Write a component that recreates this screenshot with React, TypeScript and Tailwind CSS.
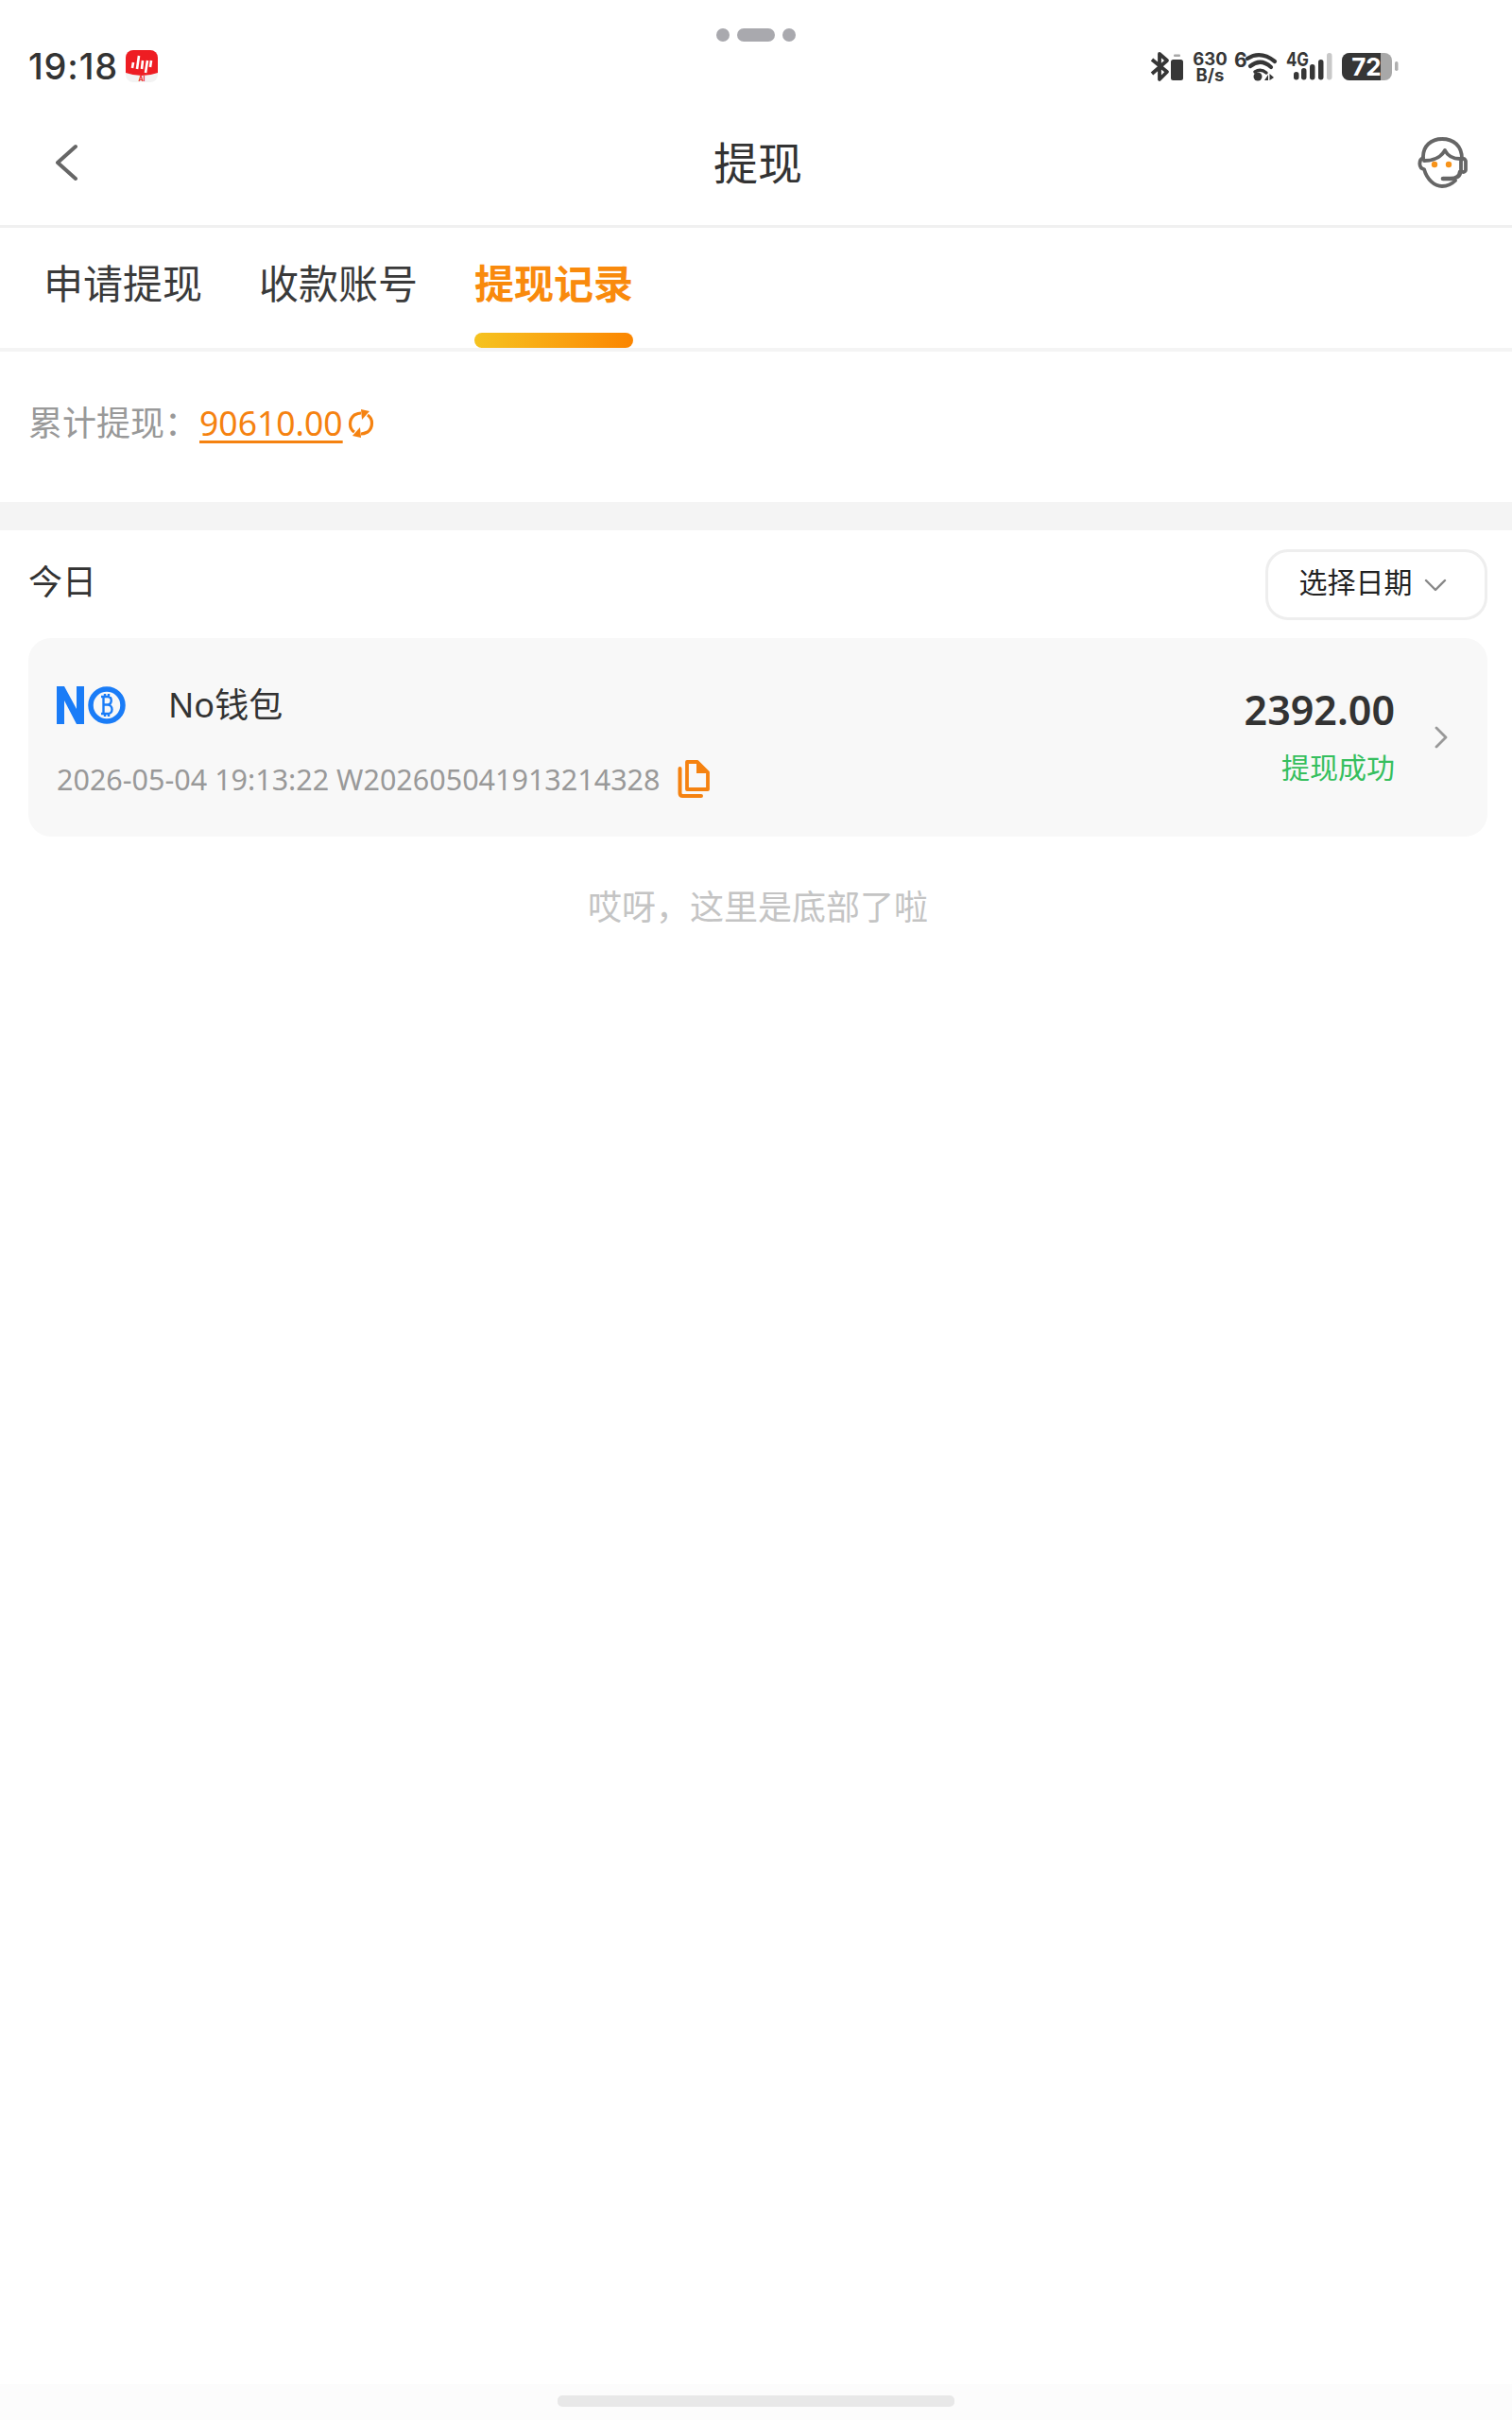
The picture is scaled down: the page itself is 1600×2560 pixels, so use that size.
const font = { fontFamily: '"Noto Sans", "Noto Sans CJK SC", sans-serif' };

const StatusIcons = () => (
  <svg width="264" height="44" viewBox="1217 48 264 44" className="block">
    <g fill="none" stroke="#363636" strokeWidth="3.8" strokeLinejoin="round">
      <path d="M1219 63 L1235 76 L1227 84 L1227 57 L1235 64 L1219 78" />
    </g>
    <rect x="1239" y="63" width="13" height="22" rx="2.5" fill="#363636" />
    <rect x="1242" y="57.5" width="7" height="2.5" rx="1" fill="#a8a8a8" />
    <text textAnchor="middle" fontSize="18.5" fontWeight="700" fill="#363636" fontFamily="Inter, sans-serif">
      <tspan x="1280.5" y="69">630</tspan>
      <tspan x="1280.5" y="85.5">B/s</tspan>
    </text>
    <text x="1306" y="71" fontSize="21" fontWeight="700" fill="#363636" fontFamily="Inter, sans-serif">6</text>
    <g fill="none" stroke="#363636" strokeWidth="4.2" strokeLinecap="round">
      <path d="M1320 62 Q1334 53 1349 65" />
      <path d="M1323 70 Q1334 61 1345 71" />
    </g>
    <circle cx="1331" cy="81" r="4.5" fill="#363636" />
    <path d="M1328 76 Q1334 72 1340 77" stroke="#363636" strokeWidth="3.5" fill="none" strokeLinecap="round" />
    <path d="M1338 85 L1342 79 L1342 85 Z M1343.5 78 L1343.5 85 L1348 82 Z" fill="#363636" />
    <text x="1361" y="70" fontSize="20" fontWeight="700" fill="#363636" fontFamily="Inter, sans-serif" textLength="24" lengthAdjust="spacingAndGlyphs">4G</text>
    <rect x="1369" y="76" width="5.5" height="8.5" rx="2.7" fill="#363636" />
    <rect x="1377" y="72" width="5.5" height="12.5" rx="2.7" fill="#363636" />
    <rect x="1386" y="68" width="5.5" height="16.5" rx="2.7" fill="#363636" />
    <rect x="1395" y="63" width="5.5" height="21.5" rx="2.7" fill="#363636" />
    <rect x="1404" y="56" width="5.5" height="28.5" rx="2.7" fill="#c8c8c8" />
    <rect x="1420" y="56" width="53" height="29" rx="8" fill="#a8a8a8" />
    <path d="M1428 56 H1461 V85 H1428 A8 8 0 0 1 1420 77 V64 A8 8 0 0 1 1428 56 Z" fill="#363636" />
    <text x="1446" y="80" textAnchor="middle" fontSize="26" fontWeight="700" fill="#fff" fontFamily="Inter, sans-serif">72</text>
    <rect x="1476" y="65" width="3.5" height="10" rx="1.7" fill="#b0b0b0" />
  </svg>
);

const AppBadge = () => (
  <svg width="34" height="34" viewBox="0 0 34 34" className="block">
    <rect width="34" height="34" rx="8" fill="#f3f3f3" />
    <path d="M8 0 H26 A8 8 0 0 1 34 8 V24 Q17 30 0 24 V8 A8 8 0 0 1 8 0 Z" fill="#ee1d23" />
    <g stroke="#fff" strokeWidth="2.6" fill="none">
      <path d="M7 19 L8 13" />
      <path d="M12 20 L14 6" />
      <path d="M17 20 L18 11" />
      <path d="M21 24 L23 11" />
      <path d="M26 18 L27 11" />
    </g>
    <text x="17" y="33" textAnchor="middle" fontSize="7" fontWeight="700" fill="#ee1d23" fontFamily="Inter, sans-serif">AI</text>
  </svg>
);

const AgentIcon = () => (
  <svg width="54" height="56" viewBox="0 0 54 56" fill="none" className="block" stroke="#666" strokeWidth="3.8" strokeLinecap="round" strokeLinejoin="round">
    <path d="M6 24 C5 10 15 3 26 3 C38 3 47 10 47 24" />
    <path d="M6 23 C1 25 1 34 7 35 C10 46 18 53 26 53 C31 53 36 51 40 47" />
    <path d="M7 26 C14 26 24 24 29 15 C32 21 38 24 45 24" />
    <rect x="46" y="24" width="5" height="14" rx="2.5" />
    <path d="M45 38 C45 42 41 45 35 45 L27 45" strokeWidth="4.6" />
    <circle cx="18" cy="30" r="3.2" fill="#f7931a" stroke="none" />
    <circle cx="33" cy="30" r="3.2" fill="#f7931a" stroke="none" />
  </svg>
);

const Logo = () => (
  <svg width="74" height="40" viewBox="0 0 74 40" className="block">
    <path d="M0 0 H8 L21 24 V0 H29 V40 H21 L8 15 V40 H0 Z" fill="#1a7cf7" />
    <circle cx="53" cy="20" r="17" fill="none" stroke="#1a7cf7" strokeWidth="5.5" />
    <path d="M47 11 H54 C59 11 59 19 54 19.5 C60 20 60 29 54 29 H47 M49.5 11 V29 M51 8 V11 M55 8 V11 M51 29 V32 M55 29 V32 M49.5 19.5 H54" fill="none" stroke="#1a7cf7" strokeWidth="2.4" />
  </svg>
);

const CopyIcon = () => (
  <svg width="34" height="40" viewBox="0 0 34 40" fill="none" className="block">
    <path d="M10 2 H21 L32 13 V31 H10 Z" stroke="#f58210" strokeWidth="3.8" strokeLinejoin="round" />
    <path d="M20 1 L33 14 H20 Z" fill="#f58210" />
    <path d="M2.5 9 V35 Q2.5 38 5.5 38 H25" stroke="#f58210" strokeWidth="4" strokeLinecap="round" />
  </svg>
);

const RefreshIcon = () => (
  <svg width="28" height="30" viewBox="0 0 28 30" fill="none" className="block">
    <path d="M7 24 C1 20 1 11 7 6 C9 5 11 4 14 4" stroke="#f58210" strokeWidth="3.2" />
    <path d="M14 0 L23 2 L15 11 Z" fill="#f58210" />
    <path d="M21 6 C27 10 27 19 21 24 C19 25 17 26 14 26" stroke="#f58210" strokeWidth="3.2" />
    <path d="M14 30 L5 28 L13 19 Z" fill="#f58210" />
  </svg>
);

const App = () => {
  const tabs = ["申请提现", "收款账号", "提现记录"];

  return (
    <div className="w-[1600px] h-[2560px] bg-white flex flex-col text-[#333]" style={font}>
      <div className="h-[44px] pt-[30px] flex justify-center items-start gap-[8px]">
        <div className="w-[14px] h-[14px] rounded-full bg-[#a9a9ae]" />
        <div className="w-[40px] h-[14px] rounded-full bg-[#a9a9ae]" />
        <div className="w-[14px] h-[14px] rounded-full bg-[#a9a9ae]" />
      </div>

      <div className="h-[52px] flex items-center justify-between pl-[30px] pr-[119px]">
        <div className="flex items-center gap-[8px]">
          <span className="text-[38px] leading-none font-medium tracking-[0.8px]" style={{ fontFamily: "Inter, sans-serif" }}>19:18</span>
          <AppBadge />
        </div>
        <StatusIcons />
      </div>

      <div className="h-[142px] pt-[10px] grid grid-cols-[1fr_auto_1fr] items-center pl-[58px] pr-[46px]">
        <svg width="24" height="40" viewBox="0 0 24 40" fill="none">
          <path d="M22 3 L3 20 L22 37" stroke="#666" strokeWidth="4" strokeLinecap="round" strokeLinejoin="round" />
        </svg>
        <span className="text-[47px] leading-none mr-[8px]">提现</span>
        <div className="justify-self-end"><AgentIcon /></div>
      </div>

      <div className="h-[3px] bg-[#f0f0f0]" />

      <div className="h-[127px] flex gap-[60px] pl-[46px]">
        {tabs.map((t, i) => (
          <div key={t} className="w-[168px] flex flex-col items-center justify-between">
            <span className={i === 2 ? "mt-[34px] text-[42px] leading-[50px] font-bold text-[#f98a0c]" : "mt-[34px] text-[42px] leading-[50px] text-[#3a3a3a]"}>{t}</span>
            {i === 2 && <div className="w-full h-[16px] rounded-full bg-gradient-to-r from-[#f5c31f] to-[#fb8500]" />}
          </div>
        ))}
      </div>
      <div className="h-[4px] bg-[#f4f4f4]" />

      <div className="h-[159px] flex items-center pl-[30px] pb-[7px]">
        <span className="text-[36px] text-[#999] leading-none">累计提现：</span>
        <span className="ml-[1px] text-[35.5px] leading-none text-[#f58210] underline decoration-[3px] underline-offset-[5px]">90610.00</span>
        <div className="ml-[5px]"><RefreshIcon /></div>
      </div>

      <div className="h-[30px] bg-[#f4f4f4]" />

      <div className="pl-[30px] pr-[26px]">
        <div className="flex items-center justify-between mt-[20px] h-[75px]">
          <span className="text-[36px] leading-none pb-[6px]">今日</span>
          <div className="w-[235px] h-[75px] border-[3px] border-[#eeeeee] rounded-[24px] flex items-center justify-center gap-[12px] pr-[8px]">
            <span className="text-[30px] leading-none text-[#222] pb-[5px]">选择日期</span>
            <svg width="24" height="14" viewBox="0 0 24 14" fill="none">
              <path d="M2 2 L12 12 L22 2" stroke="#888" strokeWidth="2.4" strokeLinecap="round" strokeLinejoin="round" />
            </svg>
          </div>
        </div>

        <div className="mt-[19px] h-[210px] bg-[#f8f8f8] rounded-[24px] flex items-center justify-between pl-[30px] pr-[42px]">
          <div className="flex flex-col pt-[10px]">
            <div className="flex items-center gap-[44px]">
              <Logo />
              <span className="text-[36px] leading-none text-[#333]">No钱包</span>
            </div>
            <div className="mt-[38px] flex items-center gap-[18px]">
              <span className="text-[30.5px] leading-none text-[#999]">2026-05-04 19:13:22 W202605041913214328</span>
              <CopyIcon />
            </div>
          </div>
          <div className="flex items-center gap-[42px]">
            <div className="flex flex-col items-end pb-[5px]">
              <span className="text-[43px] leading-none font-semibold text-[#333]">2392.00</span>
              <span className="mt-[25px] text-[30px] leading-none text-[#36bf5e]">提现成功</span>
            </div>
            <svg width="14" height="24" viewBox="0 0 14 24" fill="none">
              <path d="M2 2 L12 12 L2 22" stroke="#999" strokeWidth="2.8" strokeLinecap="round" strokeLinejoin="round" />
            </svg>
          </div>
        </div>

        <div className="mt-[57px] text-center text-[36px] leading-none text-[#c4c4c4]">哎呀，这里是底部了啦</div>
      </div>

      <div className="mt-auto h-[38px] bg-[#fcfcfc] flex justify-center pt-[12px]">
        <div className="w-[420px] h-[12px] rounded-[5px] bg-[#e8e8e8]" />
      </div>
    </div>
  );
};

export default App;
